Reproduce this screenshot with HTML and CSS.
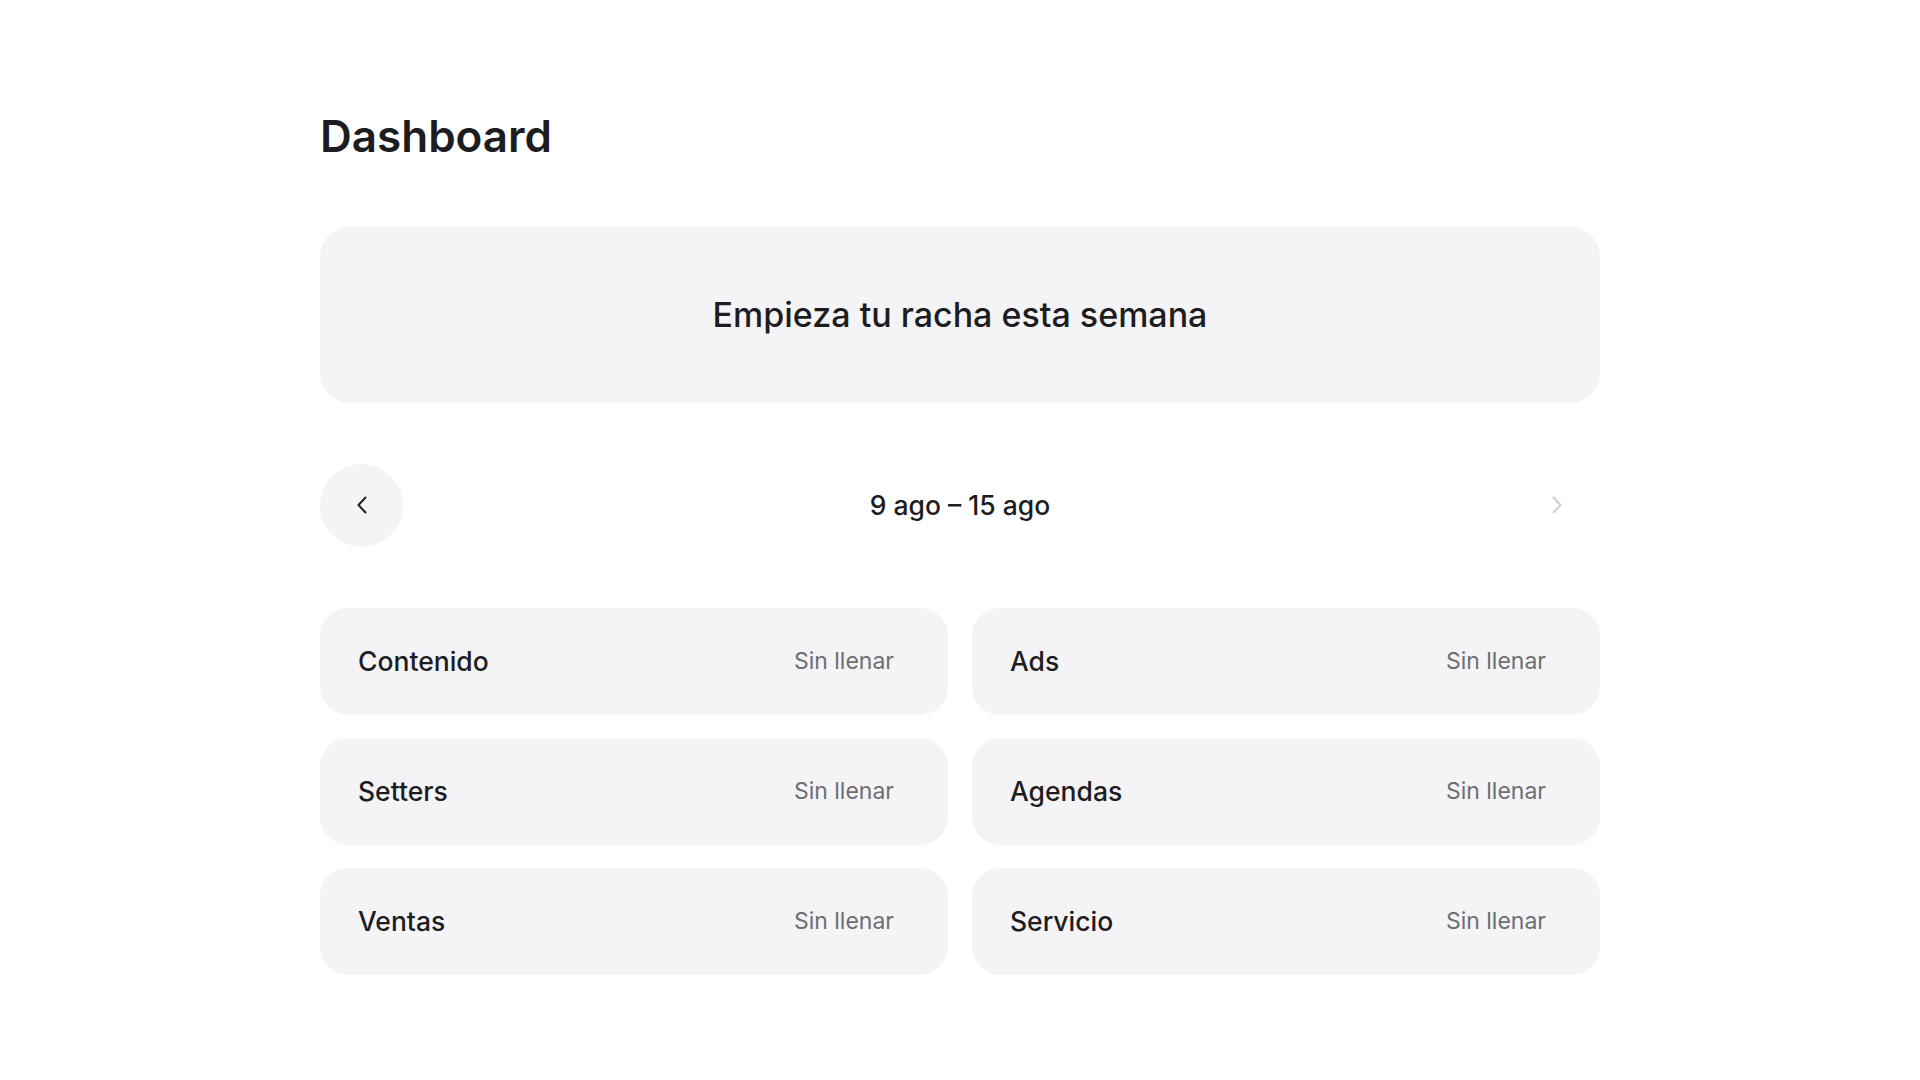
FILE: index.html
```html
<!DOCTYPE html>
<html lang="es">
<head>
    <meta charset="UTF-8">
    <meta name="viewport" content="width=device-width, initial-scale=1.0">
    <title>Dashboard</title>
    <link rel="stylesheet" href="styles.css">
</head>
<body>
    <main class="page">
        <h1 class="page-title">Dashboard</h1>

        <section class="streak-card">
            <p class="streak-text">Empieza tu racha esta semana</p>
        </section>

        <div class="week-nav">
            <button class="week-button prev-week" aria-label="Semana anterior">
                <svg width="12" height="18" viewBox="0 0 12 18" fill="none">
                    <path d="M9.5 1.5 L2.5 9 L9.5 16.5" stroke="currentColor" stroke-width="2" stroke-linecap="round" stroke-linejoin="round"/>
                </svg>
            </button>
            <span class="week-label">9 ago – 15 ago</span>
            <button class="week-button next-week" aria-label="Semana siguiente" disabled>
                <svg width="12" height="18" viewBox="0 0 12 18" fill="none">
                    <path d="M2.5 1.5 L9.5 9 L2.5 16.5" stroke="currentColor" stroke-width="2" stroke-linecap="round" stroke-linejoin="round"/>
                </svg>
            </button>
        </div>

        <div class="area-grid">
            <div class="area-card">
                <span class="area-name">Contenido</span>
                <span class="area-status">Sin llenar</span>
            </div>
            <div class="area-card">
                <span class="area-name">Ads</span>
                <span class="area-status">Sin llenar</span>
            </div>
            <div class="area-card">
                <span class="area-name">Setters</span>
                <span class="area-status">Sin llenar</span>
            </div>
            <div class="area-card">
                <span class="area-name">Agendas</span>
                <span class="area-status">Sin llenar</span>
            </div>
            <div class="area-card">
                <span class="area-name">Ventas</span>
                <span class="area-status">Sin llenar</span>
            </div>
            <div class="area-card">
                <span class="area-name">Servicio</span>
                <span class="area-status">Sin llenar</span>
            </div>
        </div>
    </main>
</body>
</html>
```

FILE: styles.css
```css
* {
    margin: 0;
    padding: 0;
    box-sizing: border-box;
}

body {
    background: #fff;
    color: #1d1d1f;
    font-family: Inter, "Noto Sans", sans-serif;
}

.page {
    width: 1280px;
    margin: 0 auto;
    padding-top: 110px;
}

.page-title {
    font-size: 44px;
    font-weight: 600;
    line-height: 1.2;
    color: #1d1d1f;
}

.streak-card {
    margin-top: 64px;
    height: 176px;
    background: #f4f4f6;
    border-radius: 30px;
    display: flex;
    align-items: center;
    justify-content: center;
}

.streak-text {
    font-size: 34px;
    font-weight: 500;
    color: #1d1d1f;
}

.week-nav {
    margin-top: 61px;
    display: flex;
    align-items: center;
    justify-content: space-between;
}

.week-button {
    width: 83px;
    height: 83px;
    border: none;
    border-radius: 50%;
    background: #f4f4f6;
    color: #222;
    display: flex;
    align-items: center;
    justify-content: center;
    cursor: pointer;
}

.week-button:disabled {
    background: transparent;
    color: #cfcfd2;
    cursor: default;
}

.next-week svg {
    margin-right: 4px;
}

.week-label {
    font-size: 26.5px;
    font-weight: 500;
    color: #1d1d1f;
}

.area-grid {
    margin-top: 61px;
    display: grid;
    grid-template-columns: 1fr 1fr;
    gap: 23px 24px;
}

.area-card {
    height: 107px;
    background: #f4f4f6;
    border-radius: 28px;
    padding: 0 54px 0 38px;
    display: flex;
    align-items: center;
    justify-content: space-between;
}

.area-name {
    font-size: 26.5px;
    font-weight: 500;
    color: #1d1d1f;
}

.area-status {
    font-size: 23px;
    font-weight: 400;
    color: #6e6e73;
}
```
